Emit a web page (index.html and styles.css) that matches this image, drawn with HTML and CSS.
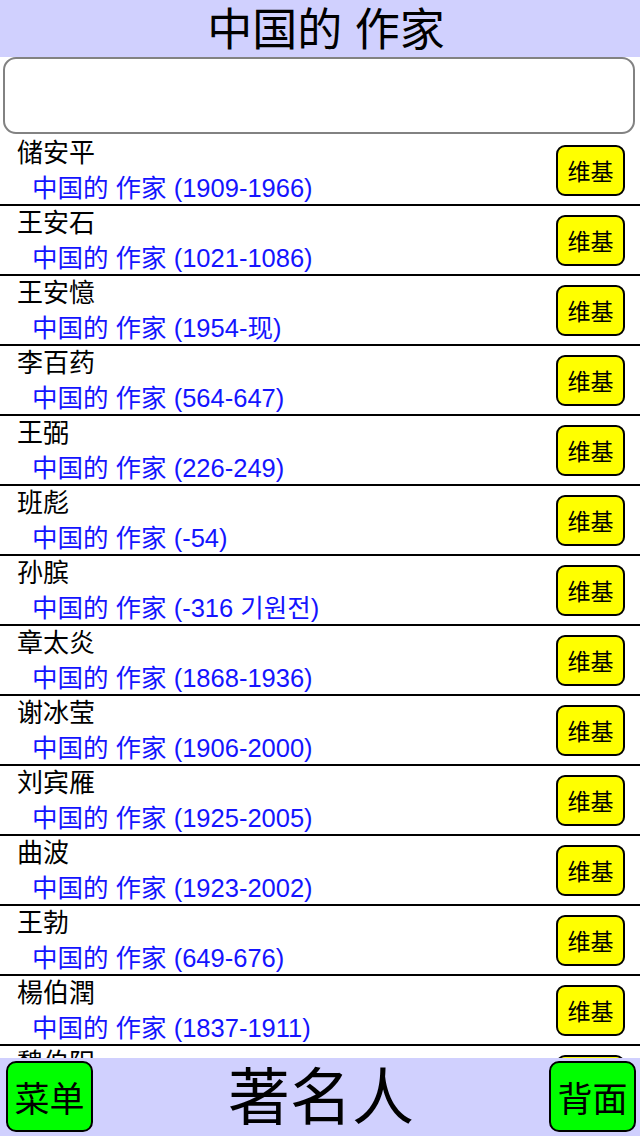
FILE: index.html
```html
<!DOCTYPE html>
<html lang="zh">
<head>
<meta charset="utf-8">
<title>中国的 作家</title>
<link rel="stylesheet" href="styles.css">
</head>
<body>
<div class="app">
  <header class="topbar">中国的 作家</header>
  <div class="search-wrap"><div class="search"></div></div>
  <div class="list">
    <div class="row"><div class="info"><div class="name">储安平</div><div class="sub">中国的 作家 (1909-1966)</div></div><div class="wiki">维基</div></div>
    <div class="row"><div class="info"><div class="name">王安石</div><div class="sub">中国的 作家 (1021-1086)</div></div><div class="wiki">维基</div></div>
    <div class="row"><div class="info"><div class="name">王安憶</div><div class="sub">中国的 作家 (1954-现)</div></div><div class="wiki">维基</div></div>
    <div class="row"><div class="info"><div class="name">李百药</div><div class="sub">中国的 作家 (564-647)</div></div><div class="wiki">维基</div></div>
    <div class="row"><div class="info"><div class="name">王弼</div><div class="sub">中国的 作家 (226-249)</div></div><div class="wiki">维基</div></div>
    <div class="row"><div class="info"><div class="name">班彪</div><div class="sub">中国的 作家 (-54)</div></div><div class="wiki">维基</div></div>
    <div class="row"><div class="info"><div class="name">孙膑</div><div class="sub">中国的 作家 (-316 기원전)</div></div><div class="wiki">维基</div></div>
    <div class="row"><div class="info"><div class="name">章太炎</div><div class="sub">中国的 作家 (1868-1936)</div></div><div class="wiki">维基</div></div>
    <div class="row"><div class="info"><div class="name">谢冰莹</div><div class="sub">中国的 作家 (1906-2000)</div></div><div class="wiki">维基</div></div>
    <div class="row"><div class="info"><div class="name">刘宾雁</div><div class="sub">中国的 作家 (1925-2005)</div></div><div class="wiki">维基</div></div>
    <div class="row"><div class="info"><div class="name">曲波</div><div class="sub">中国的 作家 (1923-2002)</div></div><div class="wiki">维基</div></div>
    <div class="row"><div class="info"><div class="name">王勃</div><div class="sub">中国的 作家 (649-676)</div></div><div class="wiki">维基</div></div>
    <div class="row"><div class="info"><div class="name">楊伯潤</div><div class="sub">中国的 作家 (1837-1911)</div></div><div class="wiki">维基</div></div>
    <div class="row"><div class="info"><div class="name">魏伯阳</div><div class="sub">中国的 作家 (100-170)</div></div><div class="wiki">维基</div></div>
  </div>
  <footer class="bottombar">
    <div class="gbtn">菜单</div>
    <div class="brand">著名人</div>
    <div class="gbtn">背面</div>
  </footer>
</div>
</body>
</html>
```
FILE: styles.css
```css
* { box-sizing: border-box; }
html, body { margin: 0; padding: 0; }
body {
  font-family: "Liberation Sans", "Noto Sans CJK SC", sans-serif;
  background: #ffffff;
  color: #000;
}
.app {
  width: 640px;
  height: 1136px;
  display: flex;
  flex-direction: column;
  overflow: hidden;
}
.topbar {
  height: 57px;
  flex: none;
  background: #d0d0fe;
  text-align: center;
  font-size: 45px;
  line-height: 57px;
  padding-top: 2px;
  padding-left: 12px;
}
.search-wrap {
  height: 79px;
  flex: none;
  padding: 0 5px 2px 3px;
}
.search {
  height: 77px;
  border: 2px solid #828282;
  border-radius: 13px;
  background: #fff;
}
.list {
  flex: 1;
  overflow: hidden;
}
.row {
  height: 70px;
  border-bottom: 2px solid #000;
  display: flex;
  align-items: center;
  justify-content: space-between;
  padding: 0 15px 0 17px;
}
.info {
  display: flex;
  flex-direction: column;
  align-self: stretch;
}
.name {
  font-size: 26px;
  line-height: 34px;
  color: #000;
}
.sub {
  font-size: 25.5px;
  line-height: 36px;
  color: #1414ff;
  padding-left: 15px;
  white-space: nowrap;
}
.wiki {
  width: 69px;
  height: 51px;
  background: #ffff00;
  border: 2px solid #000;
  border-radius: 9px;
  display: flex;
  align-items: center;
  justify-content: center;
  font-size: 23px;
}
.bottombar {
  height: 78px;
  flex: none;
  background: #d0d0fe;
  display: flex;
  align-items: flex-start;
  justify-content: space-between;
  padding: 3px 4px 0 6px;
}
.gbtn {
  width: 87px;
  height: 71px;
  background: #00ff00;
  border: 2px solid #000;
  border-radius: 10px;
  display: flex;
  align-items: center;
  justify-content: center;
  font-size: 35px;
}
.brand {
  font-size: 62px;
  line-height: 72px;
  padding-top: 2px;
}
```
